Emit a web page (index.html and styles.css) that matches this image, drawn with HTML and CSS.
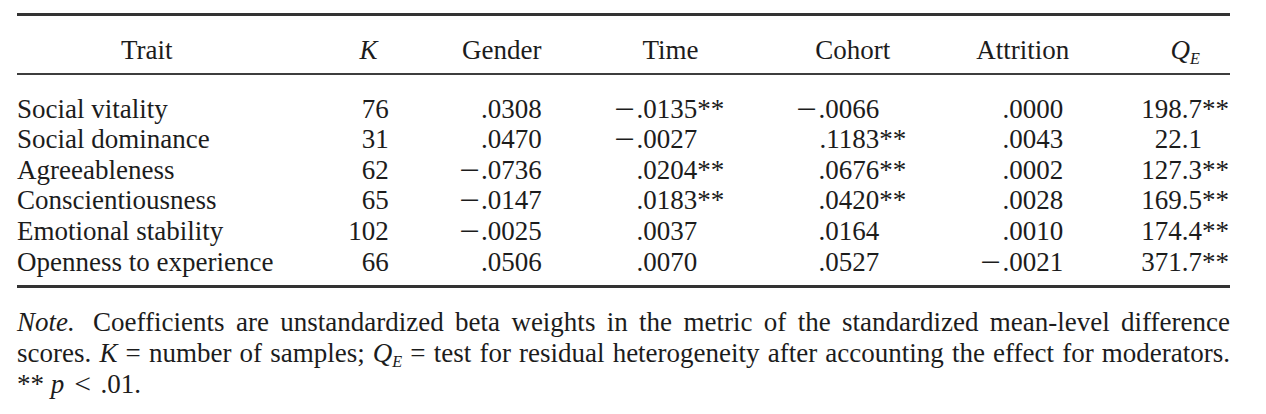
FILE: index.html
```html
<!DOCTYPE html>
<html lang="en">
<head>
<meta charset="utf-8">
<title>Moderator analysis</title>
<link rel="stylesheet" href="styles.css">
</head>
<body>
<div class="page">
  <table class="results">
    <thead>
      <tr>
        <th>Trait</th>
        <th><i>K</i></th>
        <th>Gender</th>
        <th>Time</th>
        <th>Cohort</th>
        <th>Attrition</th>
        <th><i>Q</i><sub><i>E</i></sub></th>
      </tr>
    </thead>
    <tbody>
      <tr>
        <td>Social vitality</td>
        <td>76</td>
        <td>.0308</td>
        <td><span class="neg">−</span>.0135**</td>
        <td><span class="neg">−</span>.0066<span class="pad">**</span></td>
        <td>.0000</td>
        <td>198.7**</td>
      </tr>
      <tr>
        <td>Social dominance</td>
        <td>31</td>
        <td>.0470</td>
        <td><span class="neg">−</span>.0027<span class="pad">**</span></td>
        <td>.1183**</td>
        <td>.0043</td>
        <td>22.1<span class="pad">**</span></td>
      </tr>
      <tr>
        <td>Agreeableness</td>
        <td>62</td>
        <td><span class="neg">−</span>.0736</td>
        <td>.0204**</td>
        <td>.0676**</td>
        <td>.0002</td>
        <td>127.3**</td>
      </tr>
      <tr>
        <td>Conscientiousness</td>
        <td>65</td>
        <td><span class="neg">−</span>.0147</td>
        <td>.0183**</td>
        <td>.0420**</td>
        <td>.0028</td>
        <td>169.5**</td>
      </tr>
      <tr>
        <td>Emotional stability</td>
        <td>102</td>
        <td><span class="neg">−</span>.0025</td>
        <td>.0037<span class="pad">**</span></td>
        <td>.0164<span class="pad">**</span></td>
        <td>.0010</td>
        <td>174.4**</td>
      </tr>
      <tr>
        <td>Openness to experience</td>
        <td>66</td>
        <td>.0506</td>
        <td>.0070<span class="pad">**</span></td>
        <td>.0527<span class="pad">**</span></td>
        <td><span class="neg">−</span>.0021</td>
        <td>371.7**</td>
      </tr>
    </tbody>
  </table>
  <div class="note">
    <p class="note-line"><em class="note-label">Note.</em> Coefficients are unstandardized beta weights in the metric of the standardized mean-level difference</p>
    <p class="note-line">scores. <i>K</i> = number of samples; <i>Q</i><sub><i>E</i></sub> = test for residual heterogeneity after accounting the effect for moderators.</p>
    <p class="note-prob">** <i>p</i><span class="lt">&lt;</span>.01.</p>
  </div>
</div>
</body>
</html>
```
FILE: styles.css
```css
html, body {
  margin: 0;
  padding: 0;
  background: #ffffff;
}

body {
  font-family: "Liberation Serif", "Times New Roman", serif;
  color: #1c1c1c;
  font-size: 27px;
}

.page {
  width: 1213px;
  padding: 13px 0 0 17px;
}

.results {
  width: 1213px;
  border-collapse: separate;
  border-spacing: 0;
  border-top: 3px solid #333333;
  border-bottom: 3px solid #333333;
  line-height: 30.6px;
}

.results th,
.results td {
  padding: 0;
  font-weight: normal;
  white-space: nowrap;
  box-sizing: content-box;
}

.results th {
  text-align: center;
  padding-top: 18.6px;
  padding-bottom: 8px;
  border-bottom: 2px solid #3d3d3d;
}

.results td {
  text-align: right;
}

.results td:first-child {
  text-align: left;
}

.results tbody tr:first-child td {
  padding-top: 18.4px;
}

.results tbody tr:last-child td {
  padding-bottom: 8px;
}

/* column geometry: gap before each value block, block width */
.results tr > :nth-child(1) { width: 263px; }
.results tr > :nth-child(2) { width: 40px;  padding-left: 72px; }
.results tr > :nth-child(3) { width: 80px;  padding-left: 73px; }
.results tr > :nth-child(4) { width: 108px; padding-left: 75px; }
.results tr > :nth-child(5) { width: 105px; padding-left: 75px; }
.results th:nth-child(6)    { width: 92px;  padding-left: 70px; }
.results td:nth-child(6)    { width: 86px;  padding-left: 70px; padding-right: 6px; }
.results tr > :nth-child(7) { width: 87px;  padding-left: 72px; padding-right: 1px; }

.neg {
  display: inline-block;
  margin-right: 4px;
  transform: scaleX(1.35);
}

.pad {
  visibility: hidden;
}

sub {
  font-size: 0.6em;
  line-height: 0;
  vertical-align: -0.28em;
}

.note {
  margin-top: 19px;
  width: 1213px;
  line-height: 30.8px;
}

.note p {
  margin: 0;
}

.note-line {
  white-space: nowrap;
  text-align: justify;
  text-align-last: justify;
}

.note-label {
  font-style: italic;
  margin-right: 7px;
}

.note-prob {
  text-align: left;
}

.lt {
  display: inline-block;
  margin: 0 10px 0 11px;
  transform: scaleX(1.1);
}
```
